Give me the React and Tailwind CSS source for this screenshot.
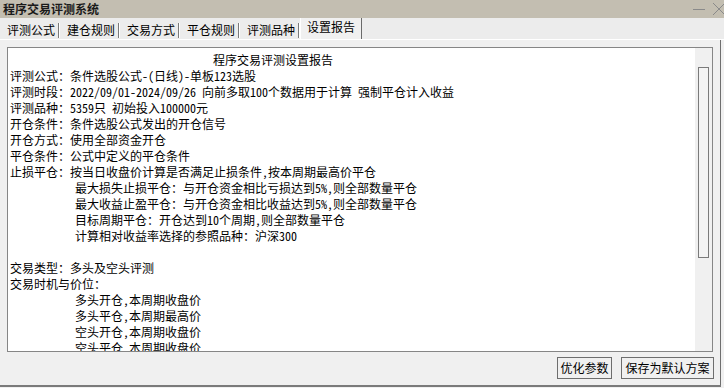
import React from "react";

const lines = [
  { t: "评测公式：条件选股公式-(日线)-单板123选股" },
  { t: "评测时段：2022/09/01-2024/09/26 向前多取100个数据用于计算 强制平仓计入收益" },
  { t: "评测品种：5359只 初始投入100000元" },
  { t: "开仓条件：条件选股公式发出的开仓信号" },
  { t: "开仓方式：使用全部资金开仓" },
  { t: "平仓条件：公式中定义的平仓条件" },
  { t: "止损平仓：按当日收盘价计算是否满足止损条件，按本周期最高价平仓" },
  { t: "最大损失止损平仓：与开仓资金相比亏损达到5%，则全部数量平仓", i: true },
  { t: "最大收益止盈平仓：与开仓资金相比收益达到5%，则全部数量平仓", i: true },
  { t: "目标周期平仓：开仓达到10个周期，则全部数量平仓", i: true },
  { t: "计算相对收益率选择的参照品种：沪深300", i: true },
  { t: "" },
  { t: "交易类型：多头及空头评测" },
  { t: "交易时机与价位：" },
  { t: "多头开仓，本周期收盘价", i: true },
  { t: "多头平仓，本周期最高价", i: true },
  { t: "空头开仓，本周期收盘价", i: true },
  { t: "空头平仓，本周期收盘价", i: true },
];

const tabs = ["评测公式", "建仓规则", "交易方式", "平仓规则", "评测品种"];

export default function App() {
  return (
    <div
      className="w-[724px] h-[388px] bg-[#f0f0f0] overflow-hidden text-[12px] text-black [font-feature-settings:'hwid']"
      style={{ fontFamily: '"Noto Sans CJK SC", "Noto Sans", sans-serif' }}
    >
      {/* title bar */}
      <div className="h-[18px] bg-[#c3beb1] flex items-center justify-between pl-[3px]">
        <span className="font-bold text-[12px] leading-[18px] text-[#1a1a1a]">程序交易评测系统</span>
        <div className="flex items-center gap-[6px] h-full">
          <svg width="14" height="14" viewBox="0 0 14 14">
            <line x1="1" y1="7.5" x2="13" y2="7.5" stroke="#8a8a8a" strokeWidth="1" />
          </svg>
          <svg width="12" height="14" viewBox="0 0 12 14">
            <line x1="1" y1="1" x2="13" y2="13" stroke="#8a8a8a" strokeWidth="1" />
            <line x1="13" y1="1" x2="1" y2="13" stroke="#8a8a8a" strokeWidth="1" />
          </svg>
        </div>
      </div>

      {/* tabs */}
      <div className="h-[22px] bg-[#ececec] flex items-end border-b border-white">
        {tabs.map((t) => (
          <div key={t} className="w-[60px] h-[21px] flex items-center">
            <span className="pl-[7px] w-[58px] leading-[16px] pt-[2px]">{t}</span>
            <div className="w-[1px] h-[15px] bg-[#7a7a7a] mt-[4px]" />
            <div className="w-[1px] h-[15px] bg-white mt-[4px]" />
          </div>
        ))}
        <div className="w-[62px] h-[21px] flex bg-[#f0f0f0] border-l border-white">
          <span className="pl-[6px] w-[60px] leading-[16px] pt-[1px]">设置报告</span>
          <div className="w-[1px] h-[21px] bg-[#6a6a6a]" />
        </div>
      </div>

      {/* body */}
      <div className="w-[721px] h-[345px] border-r border-[#6e6e6e] pt-[7px]">
        <div className="ml-[7px] w-[706px] h-[305px] border border-[#868686] bg-white flex">
          <div className="flex-1 overflow-hidden pt-[4px] pl-[2px]">
            <div className="h-[16px] leading-[16px] whitespace-pre pl-[203px]">程序交易评测设置报告</div>
            {lines.map((l, idx) => (
              <div
                key={idx}
                className={
                  "h-[16px] leading-[16px] whitespace-pre " + (l.i ? "pl-[65px]" : "pl-0")
                }
              >
                {l.t}
              </div>
            ))}
          </div>
          <div className="w-[17px] h-full bg-[#f0f0f0] pt-[19px] pl-[3px]">
            <div className="w-[11px] h-[191px] border border-[#7a7a7a] bg-[#f3f3f3]" />
          </div>
        </div>

        <div className="flex justify-end mt-[5px] pr-[6px] gap-[9px]">
          <div className="w-[55px] h-[22px] border border-[#6e6e6e] bg-[#f0f0f0] flex items-center justify-center leading-[16px]">
            优化参数
          </div>
          <div className="w-[93px] h-[22px] border border-[#6e6e6e] bg-[#f0f0f0] flex items-center justify-center leading-[16px]">
            保存为默认方案
          </div>
        </div>
      </div>
      <div className="h-[2px] bg-[#7a7a7a] w-[721px]" />
    </div>
  );
}
